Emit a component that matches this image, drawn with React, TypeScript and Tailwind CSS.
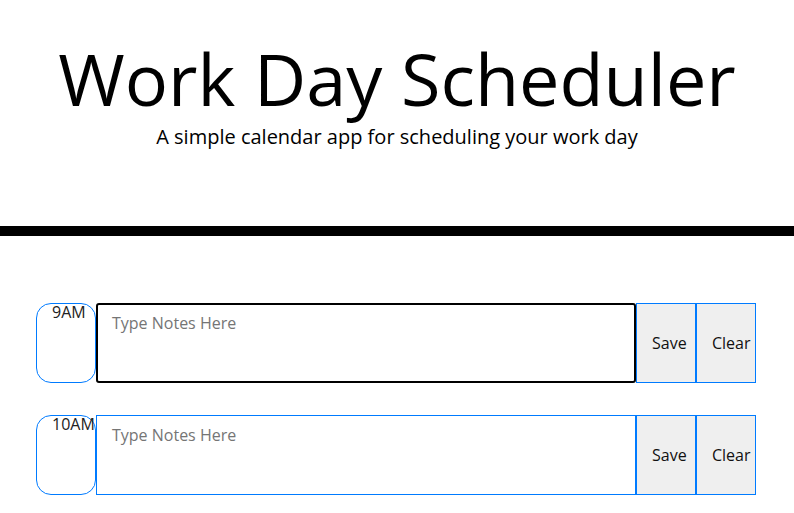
import React from "react";

const hours = ["9AM", "10AM"];

function HourRow({ hour, focused }: { hour: string; focused?: boolean }) {
  return (
    <div className="flex h-[80px]">
      <div className="w-[60px] shrink-0 rounded-[15px] border border-[#007bff] pl-[15px] text-[16px] leading-[17px] text-[#222] whitespace-nowrap">
        {hour}
      </div>
      <textarea
        placeholder="Type Notes Here"
        className={`w-[540px] shrink-0 resize-none bg-white pr-[14px] pt-[7px] text-[16px] leading-[22px] text-black placeholder:text-[#757575] outline-none ${
          focused
            ? "rounded-[3px] border-2 border-black pl-[14px]"
            : "border border-[#007bff] pl-[15px] pt-[8px]"
        }`}
      />
      <button
        type="button"
        className="w-[60px] shrink-0 border border-[#007bff] bg-[#efefef] pl-[15px] text-left text-[16px] text-[#111]"
      >
        Save
      </button>
      <button
        type="button"
        className="w-[60px] shrink-0 border border-[#007bff] bg-[#efefef] pl-[15px] text-left text-[16px] text-[#111]"
      >
        Clear
      </button>
    </div>
  );
}

export default function App() {
  return (
    <div className="min-h-screen bg-white font-['Open_Sans',sans-serif] text-black">
      <header className="border-b-[10px] border-black pt-[34px] pb-[76px] text-center">
        <h1 className="text-[72px] font-normal leading-[88px]">Work Day Scheduler</h1>
        <p className="mt-[2px] text-[20px] leading-[26px]">A simple calendar app for scheduling your work day</p>
      </header>
      <main className="mx-auto mt-[67px] flex w-[722px] flex-col gap-[32px] pr-[2px]">
        {hours.map((h, i) => (
          <HourRow key={h} hour={h} focused={i === 0} />
        ))}
      </main>
    </div>
  );
}
